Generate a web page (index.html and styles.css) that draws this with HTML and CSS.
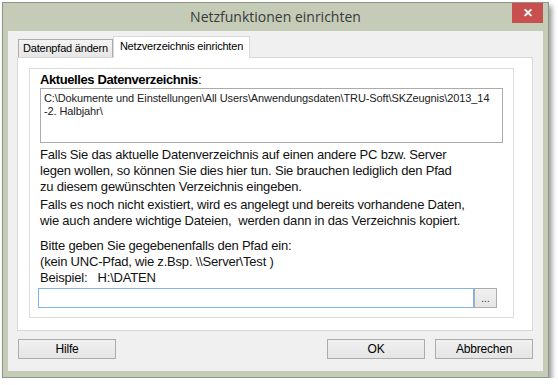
FILE: index.html
```html
<!DOCTYPE html>
<html lang="de">
<head>
  <meta charset="UTF-8" />
  <title>Netzfunktionen einrichten</title>
  <link rel="stylesheet" href="styles.css">
</head>
<body>
  <div class="window">
    <div class="titlebar">
      <div class="title">Netzfunktionen einrichten</div>
      <button class="close-btn">&#x2715;</button>
    </div>

    <div class="client">
      <div class="tabs">
        <div class="tab">Datenpfad ändern</div>
        <div class="tab active">Netzverzeichnis einrichten</div>
      </div>

      <div class="panel">
        <div class="group">
          <div class="label-bold"><b>Aktuelles Datenverzeichnis</b>:</div>
          <div class="pathbox">C:\Dokumente und Einstellungen\All Users\Anwendungsdaten\TRU-Soft\SKZeugnis\2013_14<br>-2. Halbjahr\</div>

          <p class="info">Falls Sie das aktuelle Datenverzeichnis auf einen andere PC bzw. Server<br>legen wollen, so können Sie dies hier tun. Sie brauchen lediglich den Pfad<br>zu diesem gewünschten Verzeichnis eingeben.</p>
          <p class="info second">Falls es noch nicht existiert, wird es angelegt und bereits vorhandene Daten,<br>wie auch andere wichtige Dateien,&nbsp; werden dann in das Verzeichnis kopiert.</p>

          <p class="hint">Bitte geben Sie gegebenenfalls den Pfad ein:<br>(kein UNC-Pfad, wie z.Bsp. \\Server\Test )<br>Beispiel:&nbsp;&nbsp; H:\DATEN</p>

          <div class="input-row">
            <input class="path-input" type="text" />
            <button class="browse-btn">...</button>
          </div>
        </div>
      </div>

      <div class="buttons">
        <button class="btn">Hilfe</button>
        <div class="spacer"></div>
        <button class="btn">OK</button>
        <button class="btn">Abbrechen</button>
      </div>
    </div>
  </div>
</body>
</html>
```

FILE: styles.css
```css
* { box-sizing: border-box; }

body {
  margin: 0;
  background: #fff;
  font-family: 'Liberation Sans', Arial, sans-serif;
  color: #000;
}

.window {
  margin: 2px 0 0 2px;
  width: 547px;
  height: 376px;
  background: #c4ccb8;
  border: 1px solid #8e9786;
  box-shadow: 3px 4px 5px rgba(0, 0, 0, 0.4);
  display: flex;
  flex-direction: column;
  position: relative;
}

.titlebar {
  height: 28px;
  display: flex;
  align-items: center;
  justify-content: center;
}

.title {
  font-family: 'Open Sans', 'Noto Sans', sans-serif;
  font-size: 14px;
  color: #3a3a3a;
  margin-top: -2px;
}

.close-btn {
  position: absolute;
  top: 0;
  right: 5px;
  width: 31px;
  height: 20px;
  border: none;
  background: #c7504f;
  color: #fff;
  font-size: 12px;
  font-weight: bold;
  padding: 0;
  line-height: 20px;
}

.client {
  flex: 1;
  margin: 0 5px 6px 5px;
  background: #f0f0f0;
  padding: 5px 10px 0 9px;
  display: flex;
  flex-direction: column;
}

.tabs {
  display: flex;
  align-items: flex-end;
  height: 21px;
  padding-left: 1px;
  position: relative;
  z-index: 1;
}

.tab {
  height: 18px;
  padding: 0 4px;
  font-size: 11px;
  letter-spacing: -0.2px;
  line-height: 17px;
  background: linear-gradient(#f3f3f3, #e6e6e6);
  border: 1px solid #acacac;
  border-bottom: none;
}

.tab.active {
  height: 22px;
  margin-bottom: -1px;
  padding: 0 6px;
  background: #fff;
  border-color: #d9d9d9;
  line-height: 19px;
}

.panel {
  height: 274px;
  background: #fff;
  border: 1px solid #d9d9d9;
  padding: 10px 18px 12px 11px;
}

.group {
  height: 100%;
  border: 1px solid #dcdcdc;
  padding: 2px 10px 0 10px;
}

.label-bold {
  font-size: 13px;
  letter-spacing: -0.4px;
  height: 17px;
  line-height: 17px;
}

.pathbox {
  height: 55px;
  border: 1px solid #ababab;
  padding: 3px 3px;
  font-size: 11px;
  letter-spacing: -0.1px;
  line-height: 13px;
  color: #222;
}

.info,
.hint {
  margin: 4px 0 0 0;
  font-size: 13px;
  letter-spacing: -0.2px;
  line-height: 16px;
  color: #111;
}

.info.second { margin-top: 2px; }

.hint { margin-top: 9px; }

.input-row {
  display: flex;
  margin-top: 2px;
  margin-left: -2px;
}

.path-input {
  width: 436px;
  height: 20px;
  border: 1px solid #7eb4ea;
  margin: 0;
}

.browse-btn {
  width: 23px;
  height: 20px;
  margin: 0;
  padding: 0;
  font-size: 10px;
  border: 1px solid #acacac;
  background: linear-gradient(#f0f0f0, #e5e5e5);
  color: #333;
}

.buttons {
  display: flex;
  gap: 10px;
  margin-top: 8px;
  padding-left: 1px;
}

.spacer { flex: 1; }

.btn {
  width: 98px;
  height: 20px;
  font-family: 'Liberation Sans', Arial, sans-serif;
  font-size: 12px;
  letter-spacing: -0.2px;
  border: 1px solid #acacac;
  background: linear-gradient(#f0f0f0, #e5e5e5);
  color: #000;
  padding: 0;
}
```
